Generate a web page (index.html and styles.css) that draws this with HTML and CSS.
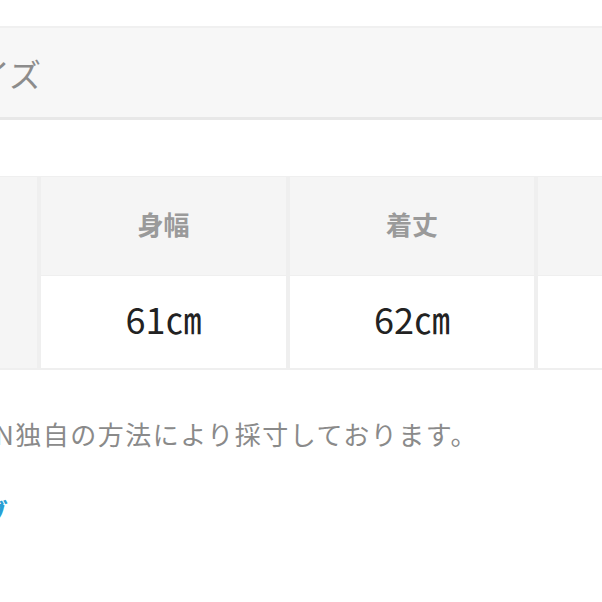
FILE: index.html
```html
<!DOCTYPE html>
<html lang="ja">
<head>
<meta charset="utf-8">
<title>サイズ</title>
<link rel="stylesheet" href="styles.css">
</head>
<body>
<div class="page">
  <div class="band">
    <h2 class="band-title">サイズ</h2>
  </div>

  <div class="size-table">
    <div class="cell rowhead"></div>
    <div class="cell head">身幅</div>
    <div class="cell head">着丈</div>
    <div class="cell head"></div>
    <div class="cell data">61㎝</div>
    <div class="cell data">62㎝</div>
    <div class="cell data"></div>
  </div>

  <p class="note">N独自の方法により採寸しております。</p>

  <a class="guide-link" href="#">ブ</a>
</div>
</body>
</html>
```

FILE: styles.css
```css
html, body {
  margin: 0;
  padding: 0;
  background: #ffffff;
  overflow: hidden;
}

.page {
  width: 602px;
  height: 602px;
  overflow: hidden;
  padding-top: 26px;
  box-sizing: border-box;
  font-family: "Noto Sans CJK JP", "Noto Sans", sans-serif;
}

.band {
  background: #f7f7f7;
  border-top: 2px solid #f0f0f0;
  border-bottom: 3px solid #e8e8e8;
  height: 89px;
  display: flex;
  align-items: center;
}

.band-title {
  margin: 0 0 0 -54px;
  font-size: 32px;
  font-weight: 400;
  color: #8c8c8c;
  line-height: 1;
}

.size-table {
  margin-top: 56px;
  margin-left: -63px;
  width: 900px;
  display: grid;
  grid-template-columns: 100px 245px 244px 244px;
  grid-template-rows: 98px 92px;
  column-gap: 4px;
  row-gap: 1px;
  padding: 1px 0 2px;
  background: #efefef;
}

.cell {
  display: flex;
  align-items: center;
  justify-content: center;
}

.rowhead {
  grid-row: 1 / span 2;
  background: #f5f5f5;
}

.head {
  background: #f5f5f5;
  color: #9a9a9a;
  font-size: 26px;
  font-weight: 700;
  padding-bottom: 6px;
}

.data {
  background: #ffffff;
  color: #222222;
  font-size: 36px;
  font-weight: 400;
  padding-bottom: 8px;
}

.note {
  margin: 44px 0 0 -5px;
  font-size: 26px;
  line-height: 40px;
  letter-spacing: 1.5px;
  color: #8a8a8a;
  white-space: nowrap;
}

.guide-link {
  display: block;
  margin: 38px 0 0 -18px;
  font-size: 26px;
  line-height: 40px;
  font-weight: 700;
  color: #2a9fd4;
  text-decoration: none;
}
```
